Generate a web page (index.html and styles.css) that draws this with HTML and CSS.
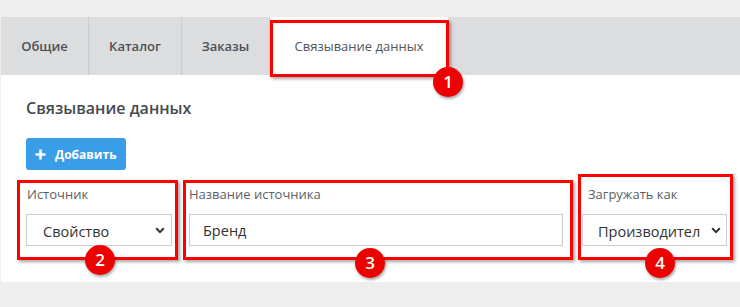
FILE: index.html
```html
<!DOCTYPE html>
<html lang="ru">
<head>
<meta charset="utf-8">
<link rel="stylesheet" href="styles.css">
</head>
<body>
<div class="top"></div>
<nav class="tabs">
  <div class="tab t1">Общие</div>
  <div class="tab t2">Каталог</div>
  <div class="tab t3">Заказы</div>
  <div class="tab t4 active">Связывание данных</div>
</nav>
<main class="panel">
  <h1 class="title">Связывание данных</h1>
  <button class="btn"><svg class="plus" width="11" height="11" viewBox="0 0 11 11"><path d="M5.5 0.5v10M0.5 5.5h10" stroke="#fff" stroke-width="2.6"/></svg><span>Добавить</span></button>
  <div class="row">
    <div class="field f1">
      <label class="label">Источник</label>
      <div class="control select"><span class="sel-text">Свойство</span><svg class="chev" width="10" height="7" viewBox="0 0 10 7"><path d="M1.2 1.3L5 5.1L8.8 1.3" fill="none" stroke="#333" stroke-width="2"/></svg></div>
    </div>
    <div class="field f2">
      <label class="label">Название источника</label>
      <div class="control input">Бренд</div>
    </div>
    <div class="field f3">
      <label class="label">Загружать как</label>
      <div class="control select"><span class="sel-text">Производител</span><svg class="chev" width="10" height="7" viewBox="0 0 10 7"><path d="M1.2 1.3L5 5.1L8.8 1.3" fill="none" stroke="#333" stroke-width="2"/></svg></div>
    </div>
  </div>
</main>
<div class="bottom"></div>

<div class="box b1"></div>
<div class="box b2"></div>
<div class="box b3"></div>
<div class="box b4"></div>
<div class="badge n1">1</div>
<div class="badge n2">2</div>
<div class="badge n3">3</div>
<div class="badge n4">4</div>
</body>
</html>
```

FILE: styles.css
```css
* { box-sizing: border-box; }
html, body { margin: 0; padding: 0; }
body {
  position: relative;
  width: 740px;
  height: 307px;
  overflow: hidden;
  background: #eeeeee;
  font-family: "Open Sans", "Noto Sans", sans-serif;
}
.top { height: 17px; }
.tabs {
  display: flex;
  height: 58px;
  margin-left: 1px;
  background: #dcdddf;
}
.tab {
  display: flex;
  align-items: center;
  justify-content: center;
  font-size: 13px;
  font-weight: 600;
  color: #4b5057;
  border-right: 1px solid #c9cbce;
}
.t1 { width: 88px; }
.t2 { width: 93px; }
.t3 { width: 88px; }
.t4 { width: 178px; }
.tab.active { background: #fff; border-right: none; color: #50555b; font-weight: 400; }
.panel {
  margin-left: 1px;
  height: 207px;
  background: #fff;
  padding: 22px 0 0 25px;
}
.title {
  margin: 0;
  font-size: 16px;
  line-height: 22px;
  font-weight: 600;
  color: #464a4f;
}
.btn {
  display: flex;
  align-items: center;
  gap: 9px;
  margin-top: 19px;
  width: 100px;
  height: 32px;
  padding: 0 0 0 9px;
  border: none;
  border-radius: 3px;
  background: #3a9de8;
  color: #fff;
  font-family: "Open Sans", "Noto Sans", sans-serif;
  font-size: 12px;
  font-weight: 700;
}
.row {
  display: flex;
  margin-top: 15px;
}
.field { display: flex; flex-direction: column; }
.f1 { width: 146px; margin-right: 17px; }
.f2 { width: 374px; margin-right: 19px; }
.f3 { width: 145px; }
.f1 .label { padding-left: 1px; }
.f3 .label { padding-left: 6px; }
.label {
  font-size: 13px;
  line-height: 18px;
  color: #5b5f64;
  margin-bottom: 11px;
}
.control {
  height: 32px;
  border: 1px solid #cccccc;
  font-size: 14.5px;
  color: #333;
  display: flex;
  align-items: center;
}
.input { padding-left: 13px; color: #2e3136; }
.select { justify-content: space-between; padding: 2px 6px 0 16px; }
.f3 .select { padding-left: 15px; padding-right: 5px; }
.chev { flex: none; margin-top: -2px; }

.box {
  position: absolute;
  border: 3px solid #ff0000;
  box-shadow: 2px 2px 3px rgba(0,0,0,0.35);
}
.b1 { left: 270px; top: 20px; width: 179px; height: 57px; }
.b2 { left: 17px; top: 180px; width: 161px; height: 80px; }
.b3 { left: 183px; top: 180px; width: 390px; height: 80px; }
.b4 { left: 578px; top: 174px; width: 155px; height: 86px; }
.badge {
  position: absolute;
  width: 30px;
  height: 30px;
  border-radius: 50%;
  background: #ee0000;
  color: #fff;
  font-family: "Open Sans", "Noto Sans", sans-serif;
  font-size: 17px;
  font-weight: 600;
  line-height: 30px;
  text-align: center;
  box-shadow: 1px 2px 3px rgba(0,0,0,0.35);
}
.n1 { left: 433px; top: 67px; }
.n2 { left: 85px; top: 245px; }
.n3 { left: 355px; top: 248px; }
.n4 { left: 645px; top: 248px; }
```
